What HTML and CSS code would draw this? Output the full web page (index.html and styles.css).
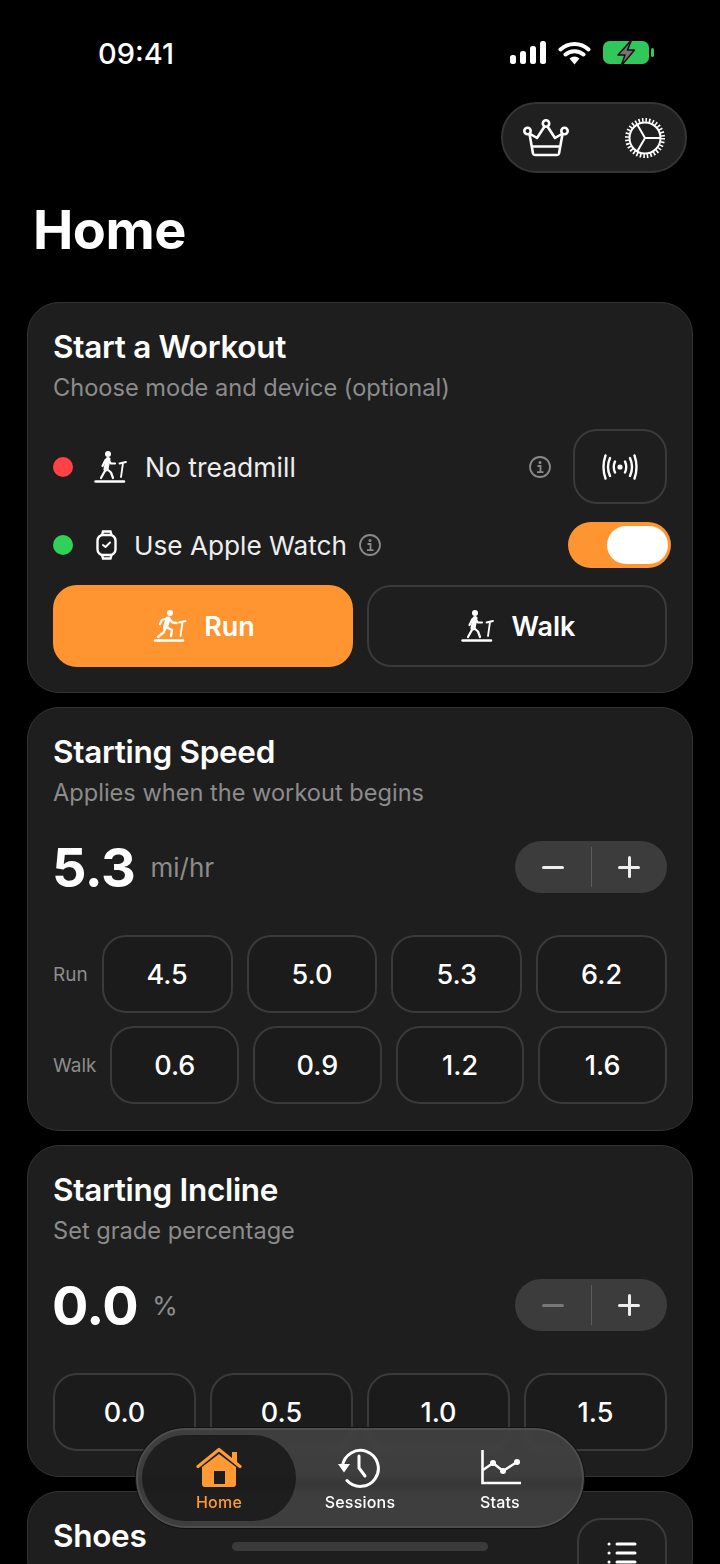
FILE: index.html
```html
<!DOCTYPE html>
<html lang="en">

<head>
    <meta charset="UTF-8">
    <meta name="viewport" content="width=device-width, initial-scale=1.0">
    <title>Home</title>
    <link rel="stylesheet" href="styles.css">
</head>

<body>
    <!-- Shared treadmill icons -->
    <svg class="sprite" width="0" height="0">
        <symbol id="tread-walk" viewBox="0 0 34 34">
            <circle cx="14" cy="4" r="3" fill="currentColor" />
            <path d="M14 9.500 12 19" stroke="currentColor" stroke-width="5" stroke-linecap="round" fill="none" />
            <path d="M14 10l3 3.500h4M11.500 10 8.500 16M12 19 7 28M13 19l4 3.500 2 5.500" stroke="currentColor" stroke-width="2.200" stroke-linecap="round" stroke-linejoin="round" fill="none" />
            <path d="M25.500 13.500 32 12M29 13l-2 14" stroke="currentColor" stroke-width="1.800" stroke-linecap="round" fill="none" />
            <path d="M1.500 31.500H30" stroke="currentColor" stroke-width="2.400" stroke-linecap="round" />
        </symbol>
        <symbol id="tread-run" viewBox="0 0 34 34">
            <circle cx="17" cy="4" r="3" fill="currentColor" />
            <path d="M15 10 12.500 18" stroke="currentColor" stroke-width="5" stroke-linecap="round" fill="none" />
            <path d="M16 9.500l3.500 4 4 .5M14 9.500 9 11 7 15M12.500 18 11 23l-6 5M13 18l6 3-1 6" stroke="currentColor" stroke-width="2.300" stroke-linecap="round" stroke-linejoin="round" fill="none" />
            <path d="M26 13.500 32.500 12M29.500 13l-2 14" stroke="currentColor" stroke-width="1.800" stroke-linecap="round" fill="none" />
            <path d="M2 31.500H30" stroke="currentColor" stroke-width="2.400" stroke-linecap="round" />
        </symbol>
        <symbol id="info" viewBox="0 0 24 24">
            <circle cx="12" cy="12" r="10" fill="none" stroke="currentColor" stroke-width="1.800" />
            <circle cx="12" cy="7.500" r="1.500" fill="currentColor" />
            <path d="M9.500 11H12.500V17M9 17.200H15.500" fill="none" stroke="currentColor" stroke-width="1.800" />
        </symbol>
    </svg>

    <div class="screen">
        <!-- Status bar -->
        <div class="status-bar">
            <span class="clock">09:41</span>
            <div class="status-icons">
                <svg width="37" height="24" viewBox="0 0 37 24">
                    <rect x="0" y="14" width="6" height="9" rx="2.500" fill="#fff" />
                    <rect x="10" y="10" width="6" height="13" rx="2.500" fill="#fff" />
                    <rect x="20" y="5" width="6" height="18" rx="2.500" fill="#fff" />
                    <rect x="30" y="0" width="6" height="23" rx="2.500" fill="#fff" />
                </svg>
                <svg width="33" height="24" viewBox="0 0 33 24">
                    <path d="M2.500 8.500C10.500 1 22.500 1 30.500 8.500M7.500 13.500C12.500 9 20.500 9 25.500 13.500" fill="none" stroke="#fff" stroke-width="4" stroke-linecap="round" />
                    <path d="M11.500 17.500Q16.500 13.500 21.500 17.500L16.500 23.500Z" fill="#fff" />
                </svg>
                <svg width="52" height="28" viewBox="0 0 52 28">
                    <rect x="1" y="2" width="46" height="23" rx="6.500" fill="#30c85a" />
                    <rect x="49" y="9" width="3" height="9" rx="1.500" fill="#30c85a" />
                    <path d="M29.500 1 16 16h7l-4 11 13.500-16h-7z" fill="#757575" stroke="#111" stroke-width="1.500" stroke-linejoin="round" />
                </svg>
            </div>
        </div>

        <div class="toolbar">
            <div class="tool-pill">
                <svg width="46" height="38" viewBox="0 0 46 38" fill="none" stroke="#fff" stroke-width="2.600" stroke-linejoin="round">
                    <circle cx="23" cy="4.500" r="3.200" />
                    <circle cx="4.500" cy="12" r="3.200" />
                    <circle cx="41.500" cy="12" r="3.200" />
                    <path d="M21.500 7.500 14 19 6.500 14.500M24.500 7.500 32 19 39.500 14.500M6.500 15 10 34.500a2 2 0 0 0 2 1.500H34a2 2 0 0 0 2-1.500L39.500 15M9 27.500H37" />
                </svg>
                <svg width="42" height="42" viewBox="0 0 42 42" fill="none" stroke="#fff">
                    <circle cx="21" cy="21" r="18" stroke-width="4" stroke-dasharray="1.600 1.930" />
                    <circle cx="21" cy="21" r="15.500" stroke-width="2" />
                    <path d="M21 21H36M21 21 13.500 8M21 21 13.500 34" stroke-width="2" />
                </svg>
            </div>
        </div>

        <h1 class="page-title">Home</h1>

        <!-- Start a Workout -->
        <section class="card card-workout">
            <h2 class="card-title">Start a Workout</h2>
            <p class="card-sub">Choose mode and device (optional)</p>

            <div class="row row-treadmill">
                <span class="dot dot-red"></span>
                <svg class="tread-icon"><use href="#tread-walk" /></svg>
                <span class="row-label">No treadmill</span>
                <svg class="info-icon info-push"><use href="#info" /></svg>
                <button class="square-btn">
                    <svg width="38" height="28" viewBox="0 0 38 28" fill="none" stroke="#fff" stroke-width="2.400" stroke-linecap="round">
                        <circle cx="19" cy="14" r="2.600" fill="#fff" stroke="none" />
                        <path d="M14 8.500Q11.500 14 14 19.500M24 8.500Q26.500 14 24 19.500M9 5Q5 14 9 23M29 5Q33 14 29 23M4.500 2.500Q.5 14 4.500 25.500M33.500 2.500Q37.500 14 33.500 25.500" />
                    </svg>
                </button>
            </div>

            <div class="row row-watch">
                <span class="dot dot-green"></span>
                <svg class="watch-icon" width="22" height="30" viewBox="0 0 22 30" fill="none" stroke="#fff" stroke-width="2.400">
                    <path d="M6 5 7 1.500H14.500L15.500 5M6 25l1 3.500H14.500L15.500 25" />
                    <rect x="1.500" y="5" width="18" height="20" rx="5.500" />
                    <path d="M7 15l2.500 2 4.500-4.500" stroke-width="2" stroke-linecap="round" stroke-linejoin="round" />
                </svg>
                <span class="row-label">Use Apple Watch</span>
                <svg class="info-icon"><use href="#info" /></svg>
                <div class="toggle"><span class="toggle-knob"></span></div>
            </div>

            <div class="mode-btns">
                <button class="mode-btn mode-active">
                    <svg class="tread-icon"><use href="#tread-run" /></svg>Run
                </button>
                <button class="mode-btn">
                    <svg class="tread-icon"><use href="#tread-walk" /></svg>Walk
                </button>
            </div>
        </section>

        <!-- Starting Speed -->
        <section class="card card-speed">
            <h2 class="card-title">Starting Speed</h2>
            <p class="card-sub">Applies when the workout begins</p>

            <div class="value-row">
                <span class="value">5.3</span>
                <span class="unit">mi/hr</span>
                <div class="stepper">
                    <span class="step"><span class="minus"></span></span>
                    <span class="step step-plus"><span class="plus"></span></span>
                </div>
            </div>

            <div class="preset-row preset-first">
                <span class="preset-label">Run</span>
                <button class="preset">4.5</button>
                <button class="preset">5.0</button>
                <button class="preset">5.3</button>
                <button class="preset">6.2</button>
            </div>
            <div class="preset-row">
                <span class="preset-label">Walk</span>
                <button class="preset">0.6</button>
                <button class="preset">0.9</button>
                <button class="preset">1.2</button>
                <button class="preset">1.6</button>
            </div>
        </section>

        <!-- Starting Incline -->
        <section class="card card-incline">
            <h2 class="card-title">Starting Incline</h2>
            <p class="card-sub">Set grade percentage</p>

            <div class="value-row">
                <span class="value">0.0</span>
                <span class="unit unit-percent">%</span>
                <div class="stepper">
                    <span class="step"><span class="minus minus-off"></span></span>
                    <span class="step step-plus"><span class="plus"></span></span>
                </div>
            </div>

            <div class="preset-row preset-first">
                <button class="preset">0.0</button>
                <button class="preset">0.5</button>
                <button class="preset">1.0</button>
                <button class="preset">1.5</button>
            </div>
        </section>

        <!-- Shoes -->
        <section class="card card-shoes">
            <h2 class="card-title">Shoes</h2>
            <button class="square-btn shoes-btn">
                <svg width="30" height="26" viewBox="0 0 30 26" fill="none" stroke="#fff" stroke-width="3" stroke-linecap="round">
                    <path d="M10 4H28M10 13H28M10 22H28M2 4H2.100M2 13H2.100M2 22H2.100" />
                </svg>
            </button>
        </section>

        <!-- Floating tab bar -->
        <nav class="tab-bar">
            <a class="tab tab-active">
                <svg width="46" height="42" viewBox="0 0 46 42">
                    <path d="M2 19.500 23 2.500 44 19.500" fill="none" stroke="#ff9a35" stroke-width="3.200" stroke-linecap="round" stroke-linejoin="round" />
                    <path d="M36 5h5v10h-5z" fill="#ff9a35" />
                    <path d="M6 20 23 7 40 20V37a3 3 0 0 1-3 3H9a3 3 0 0 1-3-3Z" fill="#ff9a35" />
                    <rect x="18" y="24" width="11" height="13" fill="#1d1d1d" />
                </svg>
                <span>Home</span>
            </a>
            <a class="tab">
                <svg width="44" height="42" viewBox="0 0 44 42" fill="none" stroke="#fff" stroke-width="3">
                    <path d="M4.500 19A18 18 0 1 1 9 33.500" stroke-linecap="round" />
                    <path d="M0 17H12L6 25.500Z" fill="#fff" stroke="none" />
                    <path d="M21 9V21L27 29" stroke-linecap="round" stroke-linejoin="round" />
                </svg>
                <span>Sessions</span>
            </a>
            <a class="tab">
                <svg width="42" height="42" viewBox="0 0 42 42" fill="none" stroke="#fff" stroke-width="2.600">
                    <path d="M3.500 3V36H42" />
                    <path d="M4 23 14 16 24 24 38 15" />
                    <circle cx="14" cy="16" r="3" fill="#fff" stroke="none" />
                    <circle cx="24" cy="24" r="3" fill="#fff" stroke="none" />
                    <circle cx="38" cy="15" r="3" fill="#fff" stroke="none" />
                </svg>
                <span>Stats</span>
            </a>
        </nav>

        <div class="home-bar"></div>
    </div>
</body>

</html>
```

FILE: styles.css
```css
* {
    box-sizing: border-box;
}

html,
body {
    margin: 0;
    padding: 0;
    background-color: #000;
}

body {
    font-family: 'Inter', 'Liberation Sans', sans-serif;
    color: #fff;
}

.sprite {
    position: absolute;
}

.screen {
    position: relative;
    width: 720px;
    height: 1564px;
    padding: 0 27px;
    overflow: hidden;
    background-color: #000;
}

button {
    font-family: inherit;
    color: #fff;
    background: none;
    cursor: pointer;
}

/* Status bar */
.status-bar {
    display: flex;
    align-items: center;
    justify-content: space-between;
    height: 102px;
    padding: 4px 39px 0 71px;
}

.clock {
    font-size: 29px;
    font-weight: 500;
}

.status-icons {
    display: flex;
    align-items: center;
    gap: 11px;
}

.toolbar {
    display: flex;
    justify-content: flex-end;
    padding-right: 6px;
}

.tool-pill {
    display: flex;
    align-items: center;
    justify-content: space-between;
    width: 186px;
    height: 71px;
    padding: 0 19px 0 20px;
    background-color: #202020;
    border: 2px solid #353535;
    border-radius: 36px;
}

.page-title {
    margin: 29px 0 0 6px;
    font-size: 54px;
    line-height: 56px;
    font-weight: 700;
    letter-spacing: -0.5px;
}

/* Cards */
.card {
    margin-top: 14px;
    padding: 25px 25px 0;
    background-color: #1e1e1e;
    border: 1px solid #333;
    border-radius: 32px;
}

.card-workout {
    height: 391px;
    margin-top: 44px;
}

.card-speed {
    height: 424px;
}

.card-incline {
    height: 332px;
}

.card-shoes {
    position: relative;
    height: 100px;
}

.card-title {
    margin: 0;
    font-size: 31.500px;
    line-height: 38px;
    font-weight: 600;
    letter-spacing: -0.3px;
}

.card-sub {
    margin: 7px 0 0;
    font-size: 23.600px;
    line-height: 30px;
    color: #8c8c8c;
}

/* Device rows */
.row {
    display: flex;
    align-items: center;
}

.row-treadmill {
    margin-top: 26px;
    height: 75px;
}

.row-watch {
    margin-top: 18px;
    height: 46px;
}

.dot {
    width: 20px;
    height: 20px;
    border-radius: 50%;
    flex-shrink: 0;
}

.dot-red {
    background-color: #ff4245;
}

.dot-green {
    background-color: #30d158;
}

.tread-icon {
    width: 34px;
    height: 34px;
    flex-shrink: 0;
}

.row-treadmill .tread-icon {
    margin-left: 21px;
}

.watch-icon {
    margin-left: 23px;
}

.row-label {
    font-size: 26.500px;
    color: #eee;
}

.row-treadmill .row-label {
    margin-left: 17px;
}

.row-watch .row-label {
    margin-left: 16px;
    font-size: 26.200px;
}

.info-icon {
    width: 24px;
    height: 24px;
    color: #8a8a8a;
    margin-left: 11px;
}

.info-push {
    margin-left: auto;
    margin-right: 21px;
}

.square-btn {
    display: flex;
    align-items: center;
    justify-content: center;
    width: 94px;
    height: 75px;
    padding: 0;
    border: 2px solid #3a3a3a;
    border-radius: 24px;
}

.toggle {
    display: flex;
    justify-content: flex-end;
    align-items: center;
    width: 103px;
    height: 46px;
    margin-left: auto;
    margin-right: -4px;
    padding: 0 3px;
    background-color: #ff9530;
    border-radius: 23px;
}

.toggle-knob {
    width: 61px;
    height: 38px;
    background-color: #fff;
    border-radius: 19px;
}

.mode-btns {
    display: flex;
    gap: 14px;
    margin-top: 17px;
}

.mode-btn {
    flex: 1;
    display: flex;
    align-items: center;
    justify-content: center;
    gap: 17px;
    height: 82px;
    padding: 0 0 0 2px;
    font-size: 27px;
    font-weight: 600;
    border: 2px solid #3a3a3a;
    border-radius: 24px;
}

.mode-active {
    background-color: #ff9530;
    border-color: #ff9530;
}

/* Value + stepper */
.value-row {
    display: flex;
    align-items: center;
    height: 52px;
    margin-top: 33px;
}

.value {
    margin-left: -1px;
    font-size: 54px;
    font-weight: 700;
    letter-spacing: -0.5px;
}

.unit {
    margin-left: 15px;
    font-size: 26px;
    color: #8c8c8c;
}

.unit-percent {
    margin-left: 14px;
}

.stepper {
    display: flex;
    align-items: center;
    width: 152px;
    height: 52px;
    margin-left: auto;
    background-color: #3c3c3c;
    border-radius: 26px;
}

.step {
    flex: 1;
    height: 40px;
    display: flex;
    align-items: center;
    justify-content: center;
}

.step-plus {
    border-left: 1px solid #5c5c5c;
}

.minus {
    width: 22px;
    height: 3px;
    background-color: #eee;
    border-radius: 2px;
}

.minus-off {
    background-color: #777;
}

.plus {
    position: relative;
    width: 22px;
    height: 3px;
    background-color: #eee;
    border-radius: 2px;
}

.plus::after {
    content: '';
    position: absolute;
    left: 9.500px;
    top: -9.500px;
    width: 3px;
    height: 22px;
    background-color: #eee;
    border-radius: 2px;
}

/* Preset buttons */
.preset-row {
    display: flex;
    align-items: center;
    gap: 14px;
    margin-top: 13px;
}

.preset-first {
    margin-top: 42px;
}

.preset-label {
    font-size: 19px;
    color: #8c8c8c;
}

.preset {
    flex: 1;
    height: 78px;
    padding: 0;
    font-size: 27px;
    font-weight: 500;
    background-color: #1b1b1b;
    border: 2px solid #3a3a3a;
    border-radius: 24px;
}

/* Shoes card */
.shoes-btn {
    position: absolute;
    right: 25px;
    top: 26px;
    width: 90px;
    height: 70px;
}

/* Tab bar floats over the scroll content */
.tab-bar {
    position: absolute;
    left: 136px;
    top: 1428px;
    display: flex;
    width: 448px;
    height: 100px;
    padding: 5px 4px;
    background-color: rgba(72, 72, 72, 0.78);
    backdrop-filter: blur(3px);
    border: 2px solid #4e4e4e;
    border-radius: 50px;
    box-shadow: 0 0 0 1px #111;
}

.tab {
    flex: 0 0 140px;
    display: flex;
    flex-direction: column;
    align-items: center;
    gap: 3px;
    padding-top: 12px;
    font-size: 16px;
    font-weight: 500;
    letter-spacing: 0.2px;
}

.tab-active {
    flex: 0 0 154px;
    margin-right: -6px;
    color: #ff9a35;
    background-color: rgba(14, 14, 14, 0.65);
    border-radius: 44px;
}

.home-bar {
    position: absolute;
    left: 232px;
    top: 1542px;
    width: 256px;
    height: 9px;
    background-color: #3a3a3a;
    border-radius: 5px;
}
```
